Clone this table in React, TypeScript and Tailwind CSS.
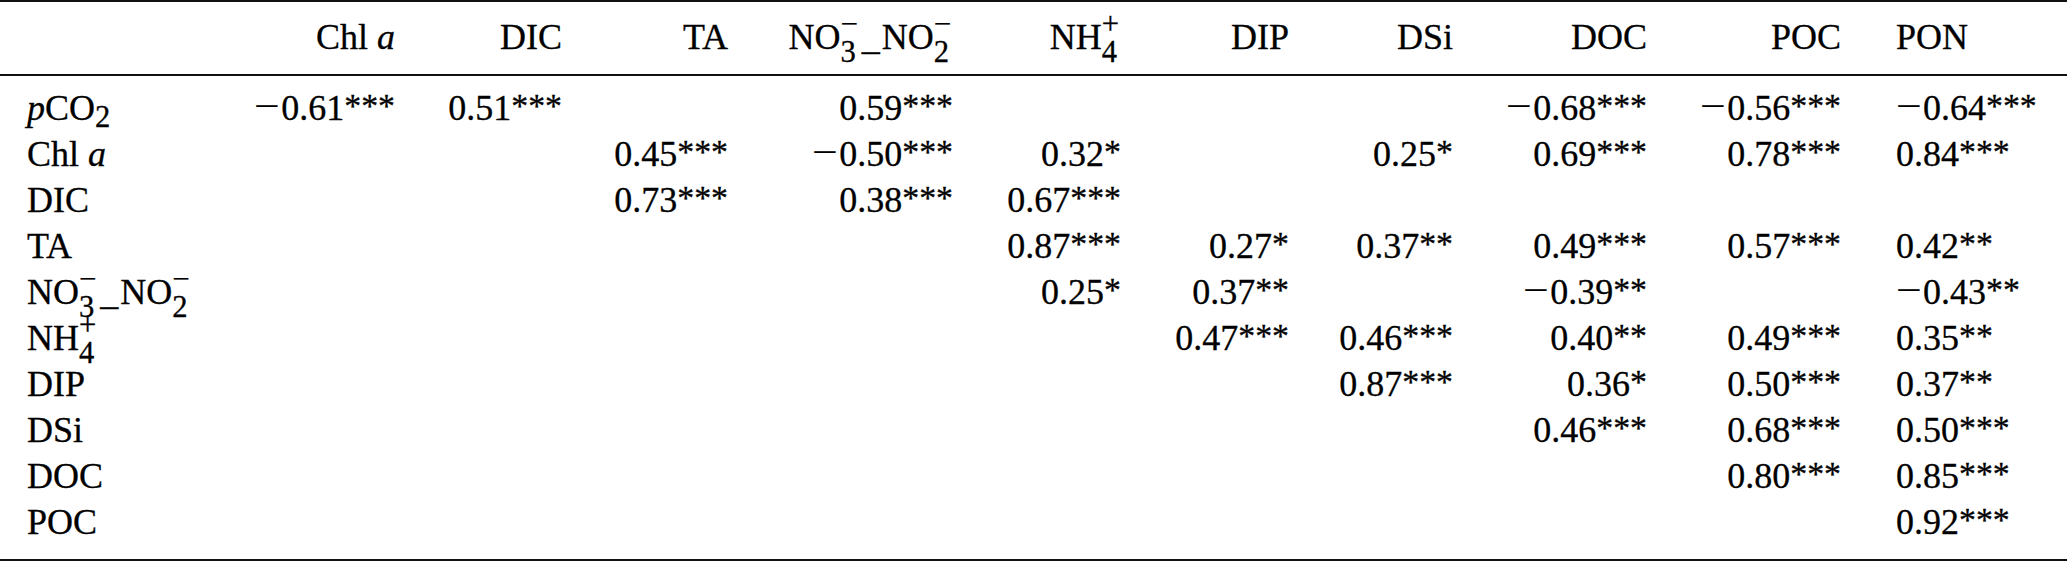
import React from "react";

const GRID =
  "grid grid-cols-[223px_145px_167px_166px_225px_168px_168px_164px_194px_194px_226px] pl-[27px]";

function Minus() {
  return (
    <span className="inline-block w-[27px] text-left">
      <span className="relative -top-[2px] inline-block origin-left scale-x-[1.25]">−</span>
    </span>
  );
}

function Val({ v }: { v: string }) {
  const neg = v.startsWith("-");
  const body = neg ? v.slice(1) : v;
  const m = body.match(/^([0-9.]+)(\**)$/);
  const num = m ? m[1] : body;
  const stars = m ? m[2] : "";
  return (
    <span>
      {neg && <Minus />}
      {num}
      <span className="relative -top-[3px] text-[0.94em]">{stars}</span>
    </span>
  );
}

function Ion({ base, sub, sup }: { base: string; sub: string; sup: string }) {
  return (
    <>
      {base}
      <sub className="top-[13px] text-[0.85em]">{sub}</sub>
      <sup className="-top-[15px] -ml-[15.3px] mr-[2px] text-[0.85em]">{sup}</sup>
    </>
  );
}

const NO3 = (
  <>
    <Ion base="NO" sub="3" sup="−" />
    <span className="mx-[2px]">_</span>
    <Ion base="NO" sub="2" sup="−" />
  </>
);
const NH4 = <Ion base="NH" sub="4" sup="+" />;
const Chl = (
  <>
    Chl <i>a</i>
  </>
);
const PCO2 = (
  <>
    <i>p</i>CO<sub className="top-[7px] text-[0.85em]">2</sub>
  </>
);

const headers: React.ReactNode[] = [
  "",
  Chl,
  "DIC",
  "TA",
  NO3,
  NH4,
  "DIP",
  "DSi",
  "DOC",
  "POC",
  "PON",
];

const rows: { label: React.ReactNode; vals: (string | null)[] }[] = [
  { label: PCO2, vals: ["-0.61***", "0.51***", null, "0.59***", null, null, null, "-0.68***", "-0.56***", "-0.64***"] },
  { label: Chl, vals: [null, null, "0.45***", "-0.50***", "0.32*", null, "0.25*", "0.69***", "0.78***", "0.84***"] },
  { label: "DIC", vals: [null, null, "0.73***", "0.38***", "0.67***", null, null, null, null, null] },
  { label: "TA", vals: [null, null, null, null, "0.87***", "0.27*", "0.37**", "0.49***", "0.57***", "0.42**"] },
  { label: NO3, vals: [null, null, null, null, "0.25*", "0.37**", null, "-0.39**", null, "-0.43**"] },
  { label: NH4, vals: [null, null, null, null, null, "0.47***", "0.46***", "0.40**", "0.49***", "0.35**"] },
  { label: "DIP", vals: [null, null, null, null, null, null, "0.87***", "0.36*", "0.50***", "0.37**"] },
  { label: "DSi", vals: [null, null, null, null, null, null, null, "0.46***", "0.68***", "0.50***"] },
  { label: "DOC", vals: [null, null, null, null, null, null, null, null, "0.80***", "0.85***"] },
  { label: "POC", vals: [null, null, null, null, null, null, null, null, null, "0.92***"] },
];

function cellClass(i: number) {
  const base = "h-[46px] leading-[46px] whitespace-nowrap";
  if (i === 0) return base + " text-left";
  if (i === 10) return base + " text-left pl-[55px]";
  return base + " text-right";
}

export default function App() {
  return (
    <div className="w-[2067px] h-[562px] bg-white text-black font-['Liberation_Serif','Times_New_Roman',serif] text-[36px] [-webkit-text-stroke:0.3px_#000]">
      <div className="border-t-2 border-b-2 border-[#111] pt-[12px] pb-[14px]">
        <div className={GRID}>
          {headers.map((h, i) => (
            <div key={i} className={cellClass(i)}>
              {h}
            </div>
          ))}
        </div>
      </div>
      <div className="border-b-2 border-[#111] pt-[9px] pb-[14px]">
        {rows.map((r, ri) => (
          <div key={ri} className={GRID}>
            <div className={cellClass(0)}>{r.label}</div>
            {r.vals.map((v, vi) => (
              <div key={vi} className={cellClass(vi + 1)}>
                {v ? <Val v={v} /> : null}
              </div>
            ))}
          </div>
        ))}
      </div>
    </div>
  );
}
